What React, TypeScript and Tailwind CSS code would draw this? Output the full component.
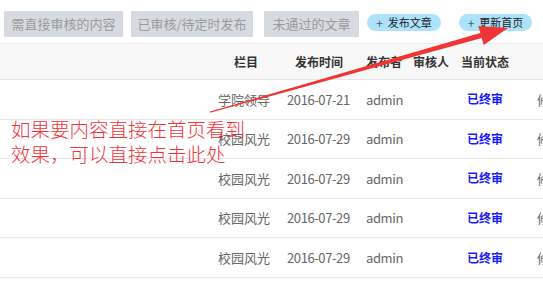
import React from "react";

const rows = [
  { cat: "学院领导", date: "2016-07-21" },
  { cat: "校园风光", date: "2016-07-29" },
  { cat: "校园风光", date: "2016-07-29" },
  { cat: "校园风光", date: "2016-07-29" },
  { cat: "校园风光", date: "2016-07-29" },
];

export default function App() {
  const font = { fontFamily: '"Noto Sans CJK SC", "Noto Sans", sans-serif' };
  return (
    <div className="relative w-[543px] h-[292px] overflow-hidden bg-white" style={font}>
      <div className="flex items-start pt-[11px] pl-[4px] h-[43px]">
        <div className="shrink-0 w-[119px] h-[26px] bg-[#d6dbe1] text-[#9a9a9a] text-[13px] flex items-center justify-center">需直接审核的内容</div>
        <div className="shrink-0 ml-[8px] w-[122px] h-[26px] bg-[#d6dbe1] text-[#9a9a9a] text-[13px] flex items-center justify-center">已审核/待定时发布</div>
        <div className="shrink-0 ml-[11px] w-[95px] h-[26px] bg-[#d6dbe1] text-[#9a9a9a] text-[13px] flex items-center justify-center">未通过的文章</div>
        <div className="shrink-0 ml-[8px] mt-[3px] w-[74px] h-[17px] rounded-full bg-[#ace3fb] text-[#1a1a1a] text-[11px] flex items-center justify-center gap-[5px]">
          <span className="text-[#555] text-[12px] leading-none">+</span>
          <span>发布文章</span>
        </div>
        <div className="shrink-0 ml-[18px] mt-[3px] w-[73px] h-[17px] rounded-full bg-[#ace3fb] text-[#1a1a1a] text-[11px] flex items-center justify-center gap-[5px]">
          <span className="text-[#555] text-[12px] leading-none">+</span>
          <span>更新首页</span>
        </div>
      </div>
      <div className="border-t border-[#ececec] bg-[#f8f8f8] h-[37px] flex items-center text-[12px] font-bold text-[#333] border-b border-b-[#e6e6e6]">
        <div className="shrink-0 w-[210px]" />
        <div className="shrink-0 w-[60px] text-right pr-[12px]">栏目</div>
        <div className="shrink-0 w-[90px] pl-[25px]">发布时间</div>
        <div className="shrink-0 w-[48px] pl-[6px]">发布者</div>
        <div className="shrink-0 w-[47px] pl-[5px]">审核人</div>
        <div className="shrink-0 w-[75px] pl-[6px]">当前状态</div>
      </div>
      {rows.map((r, i) => (
        <div key={i} className="h-[39.6px] flex items-center border-b border-[#e8e8e8] text-[#666]">
          <div className="shrink-0 w-[210px]" />
          <div className="shrink-0 w-[60px] text-right text-[13px]">{r.cat}</div>
          <div className="shrink-0 w-[90px] pl-[17px] text-[13px] tracking-[-0.4px]">{r.date}</div>
          <div className="shrink-0 w-[48px] pl-[6px] text-[13px] tracking-[-0.4px]">admin</div>
          <div className="shrink-0 w-[47px]" />
          <div className="shrink-0 w-[75px] pl-[12px] text-[12px] font-bold text-[#1a1aff]">已终审</div>
          <div className="shrink-0 pl-[7px] text-[13px]">修</div>
        </div>
      ))}
      <div
        className="absolute left-[11px] top-[116px] text-[19.5px] leading-[25px] text-[#f0323c] font-light"
        style={{ fontFamily: '"Noto Sans CJK SC", serif' }}
      >
        <div>如果要内容直接在首页看到</div>
        <div>效果，可以直接点击此处</div>
      </div>
      <svg className="absolute left-0 top-0" width="543" height="292" viewBox="0 0 543 292">
        <polygon
          points="210,112.8 481.7,37.9 483.7,45.1 508,28 478.3,25.9 480.3,33.1 210,111.6"
          fill="#f03535"
        />
      </svg>
    </div>
  );
}
